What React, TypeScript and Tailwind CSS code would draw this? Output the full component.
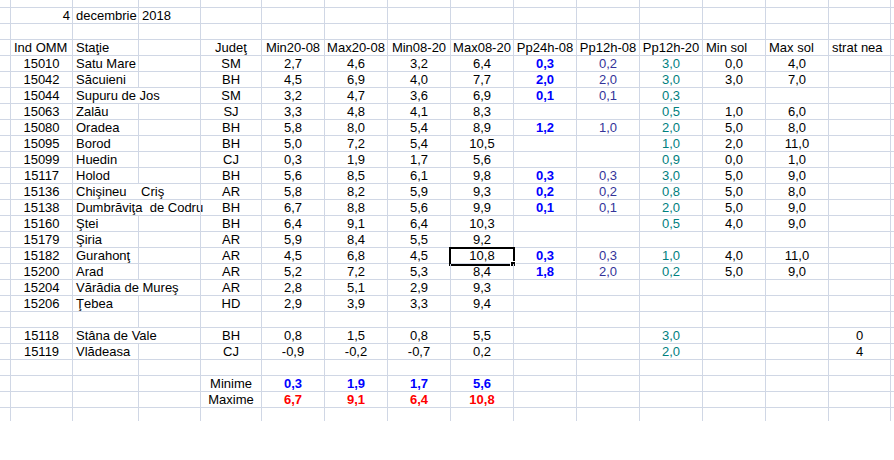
import React from "react";

type Cell = {
  t?: string;
  a?: "l" | "c" | "r";
  c?: string;
  open?: boolean; // text spills into next cell, hide gridline
  sel?: boolean;
};

const W = [
  "w-[11px]",
  "w-[62px]",
  "w-[66px]",
  "w-[62px]",
  "w-[61px]",
  "w-[63px]",
  "w-[63px]",
  "w-[63px]",
  "w-[63px]",
  "w-[63px]",
  "w-[63px]",
  "w-[63px]",
  "w-[63px]",
  "w-[63px]",
  "w-[62px]",
];

const ALIGN = { l: "justify-start pl-[3px]", c: "justify-center", r: "justify-end pr-[2px]" };

const BOLD_BLUE = "text-[#0000ff] font-bold";
const BOLD_RED = "text-[#ff0000] font-bold";
const PURPLE = "text-[#333399]";
const TEAL = "text-[#008080]";

// station rows: id, name, wide, county, min2008, max2008, min0820, max0820, pp24, pp12a, pp12b, minSol, maxSol, snow
const stations: [string, string, boolean, string, string, string, string, string, string, string, string, string, string, string][] = [
  ["15010", "Satu Mare", false, "SM", "2,7", "4,6", "3,2", "6,4", "0,3", "0,2", "3,0", "0,0", "4,0", ""],
  ["15042", "Săcuieni", false, "BH", "4,5", "6,9", "4,0", "7,7", "2,0", "2,0", "3,0", "3,0", "7,0", ""],
  ["15044", "Supuru de Jos", true, "SM", "3,2", "4,7", "3,6", "6,9", "0,1", "0,1", "0,3", "", "", ""],
  ["15063", "Zalău", false, "SJ", "3,3", "4,8", "4,1", "8,3", "", "", "0,5", "1,0", "6,0", ""],
  ["15080", "Oradea", false, "BH", "5,8", "8,0", "5,4", "8,9", "1,2", "1,0", "2,0", "5,0", "8,0", ""],
  ["15095", "Borod", false, "BH", "5,0", "7,2", "5,4", "10,5", "", "", "1,0", "2,0", "11,0", ""],
  ["15099", "Huedin", false, "CJ", "0,3", "1,9", "1,7", "5,6", "", "", "0,9", "0,0", "1,0", ""],
  ["15117", "Holod", false, "BH", "5,6", "8,5", "6,1", "9,8", "0,3", "0,3", "3,0", "5,0", "9,0", ""],
  ["15136", "Chişineu    Criş", true, "AR", "5,8", "8,2", "5,9", "9,3", "0,2", "0,2", "0,8", "5,0", "8,0", ""],
  ["15138", "Dumbrăviţa  de Codru", true, "BH", "6,7", "8,8", "5,6", "9,9", "0,1", "0,1", "2,0", "5,0", "9,0", ""],
  ["15160", "Ştei", false, "BH", "6,4", "9,1", "6,4", "10,3", "", "", "0,5", "4,0", "9,0", ""],
  ["15179", "Şiria", false, "AR", "5,9", "8,4", "5,5", "9,2", "", "", "", "", "", ""],
  ["15182", "Gurahonţ", false, "AR", "4,5", "6,8", "4,5", "10,8", "0,3", "0,3", "1,0", "4,0", "11,0", ""],
  ["15200", "Arad", false, "AR", "5,2", "7,2", "5,3", "8,4", "1,8", "2,0", "0,2", "5,0", "9,0", ""],
  ["15204", "Vărădia de Mureş", true, "AR", "2,8", "5,1", "2,9", "9,3", "", "", "", "", "", ""],
  ["15206", "Ţebea", false, "HD", "2,9", "3,9", "3,3", "9,4", "", "", "", "", "", ""],
];

const mountain: typeof stations = [
  ["15118", "Stâna de Vale", true, "BH", "0,8", "1,5", "0,8", "5,5", "", "", "3,0", "", "", "0"],
  ["15119", "Vlădeasa", false, "CJ", "-0,9", "-0,2", "-0,7", "0,2", "", "", "2,0", "", "", "4"],
];

function stationCells(s: (typeof stations)[number], selectRow = false): Cell[] {
  const [id, name, wide, jud, a, b, c, d, p24, p12a, p12b, mn, mx, sn] = s;
  return [
    {},
    { t: id, a: "c" },
    { t: name, a: "l", open: wide },
    {},
    { t: jud, a: "c" },
    { t: a, a: "c" },
    { t: b, a: "c" },
    { t: c, a: "c" },
    { t: d, a: "c", sel: selectRow },
    { t: p24, a: "c", c: BOLD_BLUE },
    { t: p12a, a: "c", c: PURPLE },
    { t: p12b, a: "c", c: TEAL },
    { t: mn, a: "c" },
    { t: mx, a: "c" },
    { t: sn, a: "c" },
  ];
}

function Row({ cells = [], h = "h-[16px]", last = false }: { cells?: Cell[]; h?: string; last?: boolean }) {
  return (
    <div className={`flex ${h} ${last ? "" : "border-b border-[#d0d7e5]"}`}>
      {W.map((w, i) => {
        const cell = cells[i] || {};
        return (
          <div
            key={i}
            className={`relative ${w} shrink-0 flex items-center whitespace-pre leading-[15px] ${
              cell.open ? "border-r border-r-transparent" : "border-r border-[#d0d7e5]"
            } ${ALIGN[cell.a || "l"]} ${cell.c || ""}`}
          >
            {cell.t}
            {cell.sel && (
              <>
                <div className="absolute -left-[2px] -top-[1px] w-[66px] h-[19px] border-2 border-black" />
                <div className="absolute left-[59px] top-[13px] w-[6px] h-[6px] bg-black border border-white" />
              </>
            )}
          </div>
        );
      })}
      <div className="flex-1" />
    </div>
  );
}

export default function App() {
  const header: Cell[] = [
    {},
    { t: "Ind OMM", a: "l" },
    { t: "Staţie", a: "l" },
    {},
    { t: "Judeţ", a: "c" },
    { t: "Min20-08", a: "c" },
    { t: "Max20-08", a: "c" },
    { t: "Min08-20", a: "c" },
    { t: "Max08-20", a: "c" },
    { t: "Pp24h-08", a: "c" },
    { t: "Pp12h-08", a: "c" },
    { t: "Pp12h-20", a: "c" },
    { t: "Min sol", a: "l" },
    { t: "Max sol", a: "l" },
    { t: "strat nea", a: "l" },
  ];

  const date: Cell[] = [{}, { t: "4", a: "r" }, { t: "decembrie", a: "l" }, { t: "2018", a: "l" }];

  const minime: Cell[] = [
    {}, {}, {}, {},
    { t: "Minime", a: "c" },
    { t: "0,3", a: "c", c: BOLD_BLUE },
    { t: "1,9", a: "c", c: BOLD_BLUE },
    { t: "1,7", a: "c", c: BOLD_BLUE },
    { t: "5,6", a: "c", c: BOLD_BLUE },
  ];
  const maxime: Cell[] = [
    {}, {}, {}, {},
    { t: "Maxime", a: "c" },
    { t: "6,7", a: "c", c: BOLD_RED },
    { t: "9,1", a: "c", c: BOLD_RED },
    { t: "6,4", a: "c", c: BOLD_RED },
    { t: "10,8", a: "c", c: BOLD_RED },
  ];

  return (
    <div className="w-[894px] h-[460px] bg-white text-black text-[13px] font-['Liberation_Sans',Arial,sans-serif] overflow-hidden">
      <Row h="h-[8px]" />
      <Row cells={date} />
      <Row />
      <Row cells={header} />
      {stations.map((s) => (
        <Row key={s[0]} cells={stationCells(s, s[0] === "15182")} />
      ))}
      <Row />
      {mountain.map((s) => (
        <Row key={s[0]} cells={stationCells(s)} />
      ))}
      <Row />
      <Row cells={minime} />
      <Row cells={maxime} />
      <Row h="h-[13px]" last />
    </div>
  );
}
